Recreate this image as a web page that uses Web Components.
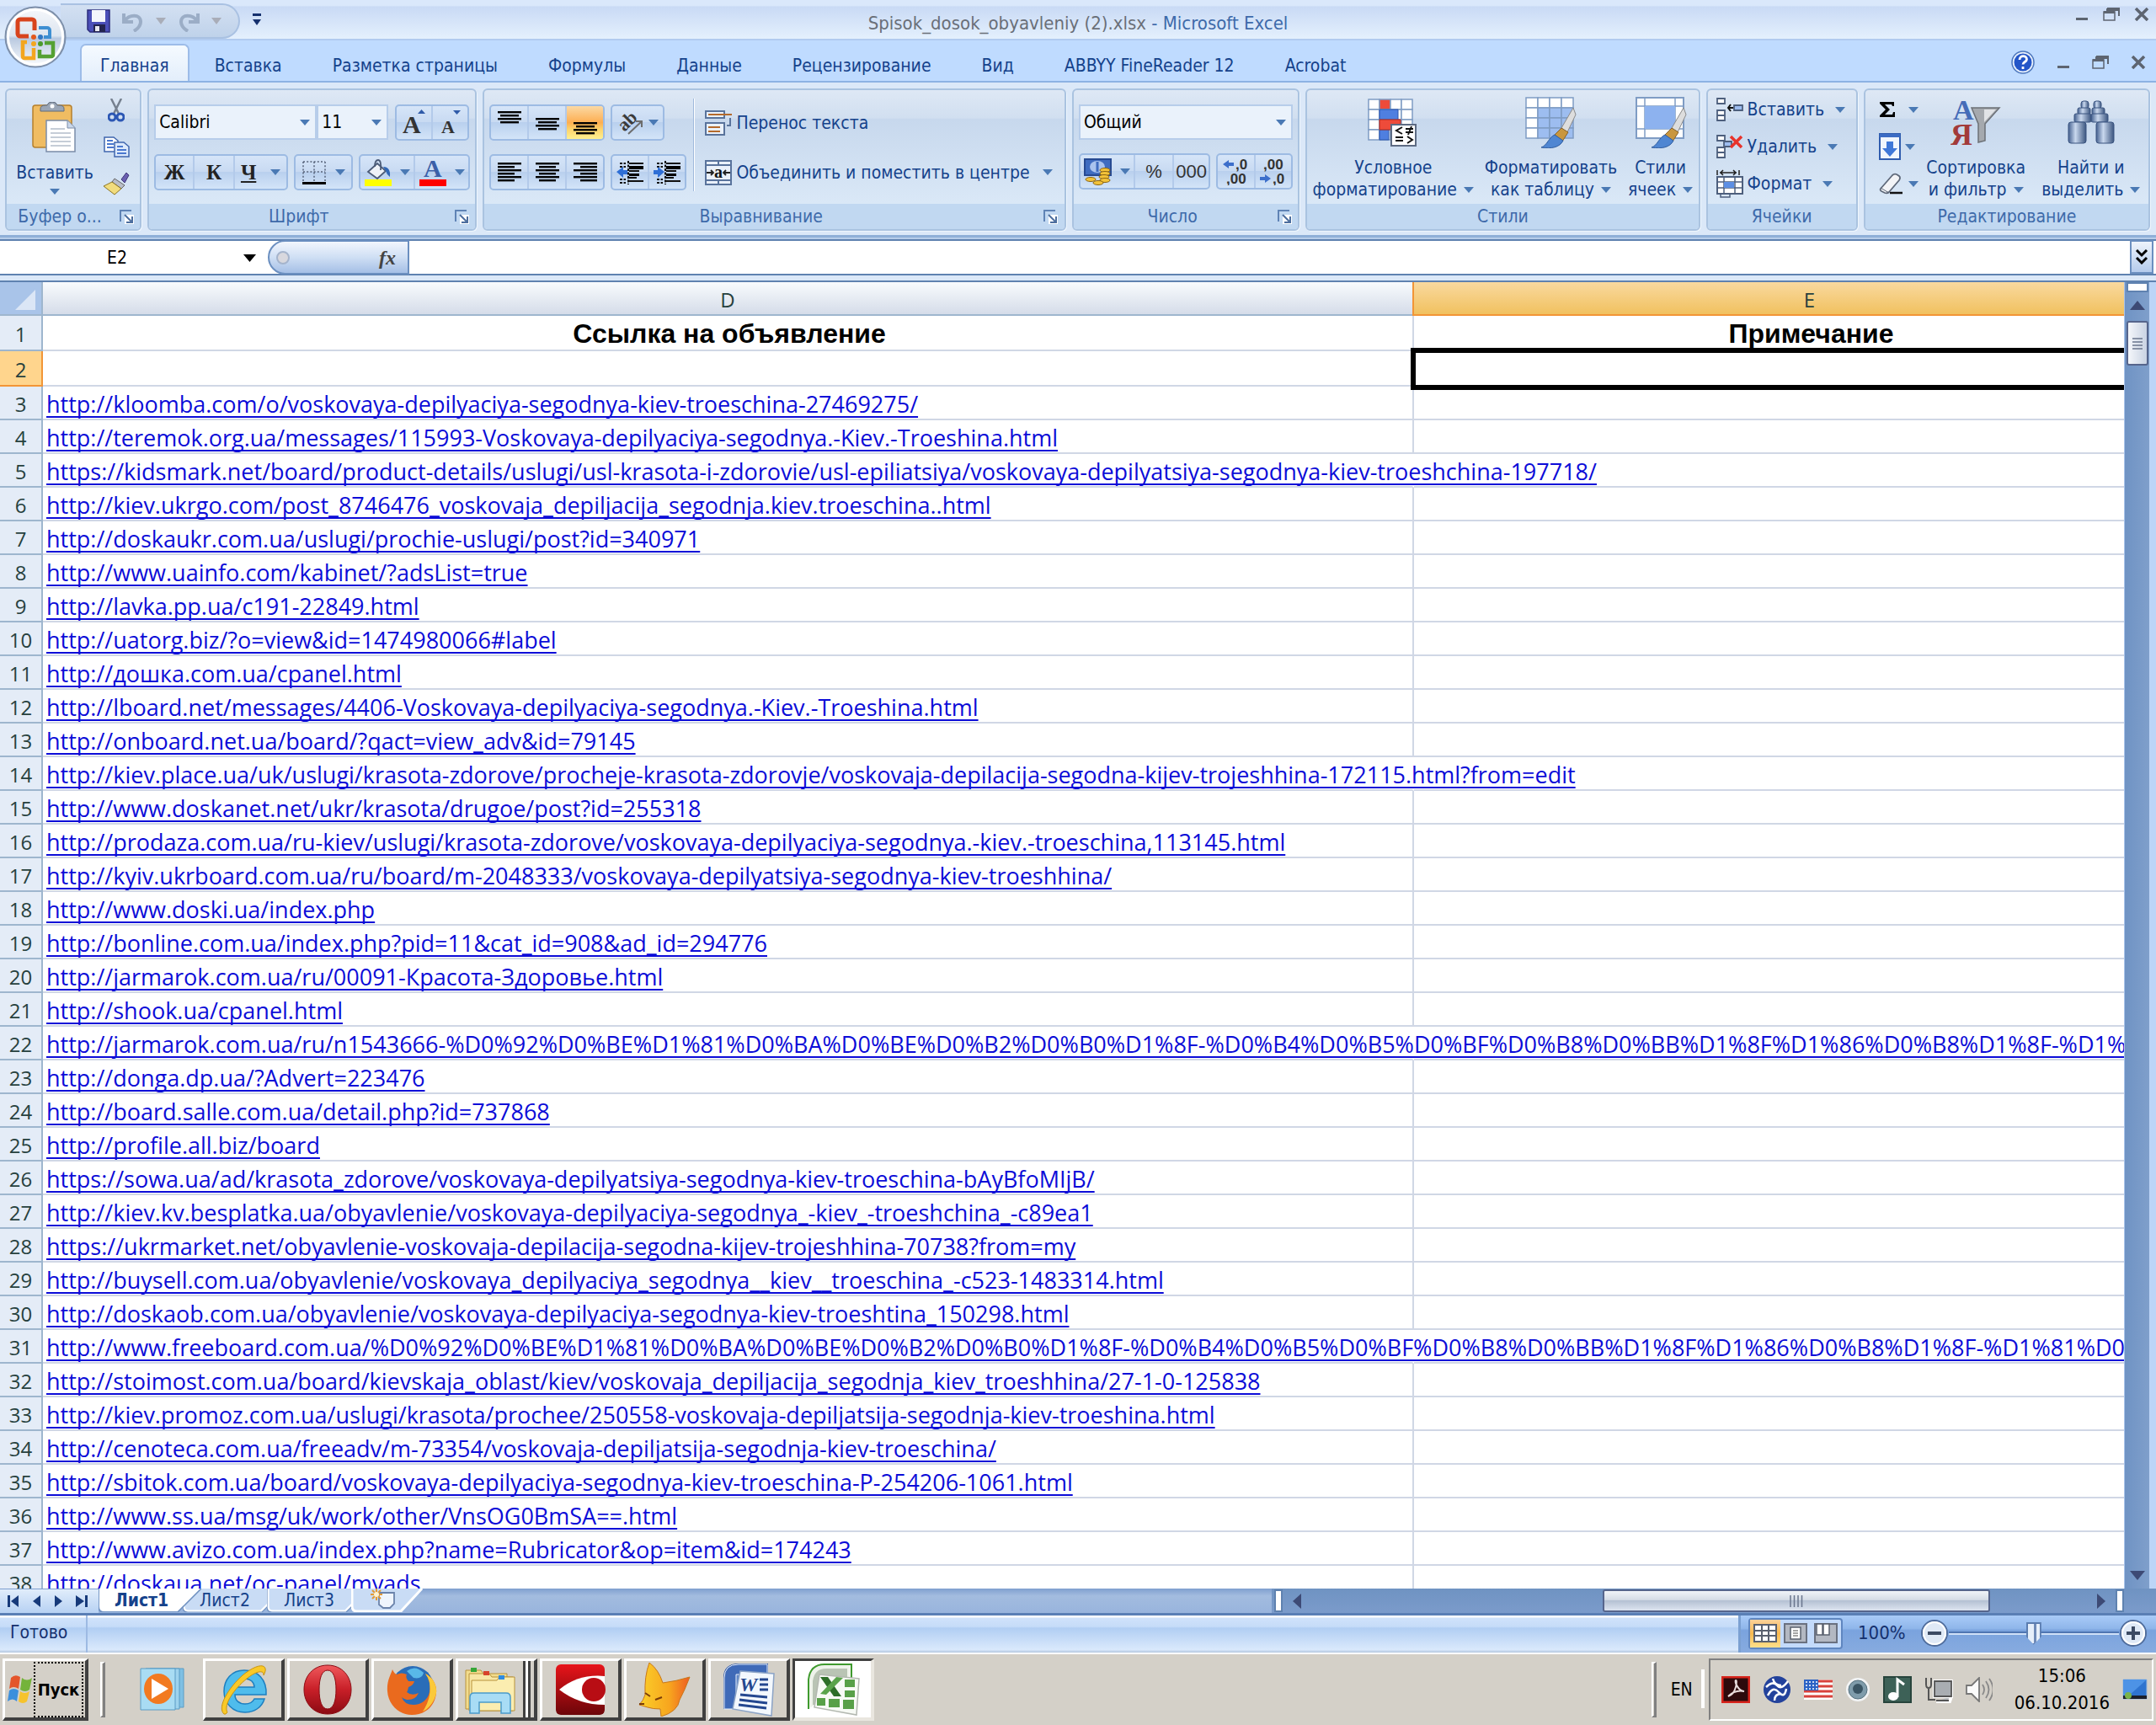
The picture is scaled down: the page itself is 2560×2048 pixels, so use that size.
<!DOCTYPE html>
<html lang="ru">
<head>
<meta charset="utf-8">
<title>Spisok_dosok_obyavleniy (2).xlsx - Microsoft Excel</title>
<style>
html,body{margin:0;height:100%}
body{font-family:"DejaVu Sans Condensed","DejaVu Sans",sans-serif;font-size:21px;line-height:26px;color:#15428b;overflow:hidden}
</style>
</head>
<body>
<xl-app></xl-app>
<script>
const BASE = `<style>
*{box-sizing:border-box}
button,input,select{font:inherit;color:inherit;margin:0;padding:0;border:0;background:none;outline:0;border-radius:0}
button{display:flex;align-items:center;justify-content:center;cursor:default;white-space:nowrap}
svg{display:block}
</style>`;
function fragment(html) {
  const t = document.createElement('template');
  t.innerHTML = html;
  return t.content;
}
function define(name, html, setup) {
  const content = fragment(BASE + html);
  customElements.define(name, class extends HTMLElement {
    constructor() {
      super();
      this.attachShadow({mode: 'open'}).append(content.cloneNode(true));
    }
    connectedCallback() { if (setup) setup(this, this.shadowRoot); }
  });
}

/* ---------- icons ---------- */
const bars = (list) => list.map(([x, y, l]) => `<rect x="${x}" y="${y}" width="${l}" height="2.4"/>`).join('');
const cells = (x, y, cw, ch, cols, rows, fill) => {
  let s = '';
  for (let r = 0; r < rows; r++) for (let c = 0; c < cols; c++)
    s += `<rect x="${x + c * cw}" y="${y + r * ch}" width="${cw}" height="${ch}" fill="${fill(c, r)}" stroke="#7f9cc4" stroke-width="1.5"/>`;
  return s;
};
const brush = `<path d="M58 14 44 38l7 5L61 22Z" fill="#ddd" stroke="#8a8a8a"/><path d="m44 38-8 8 9 8 7-11Z" fill="#c9963e" stroke="#86622a"/><path d="M36 46c-7 3-9 13-16 15 12 2 22 0 26-8Z" fill="#4f86d2" stroke="#2f5c9e"/>`;
const ICONS = {
  down: [12, 7, `<path d="M0 0h12L6 7Z" fill="#4a79b4"/>`],
  downGrey: [12, 8, `<path d="M0 0h12L6 8Z" fill="#a9adb8"/>`],
  downBlack: [15, 9, `<path d="M0 0h15L7.500 9Z" fill="#000"/>`],
  qat: [12, 14, `<path d="M1 0h10v3H1ZM1 7h10L6 14Z" fill="#15306e"/>`],
  office: [74, 74, `<defs><linearGradient id="a" x2="0" y2="1"><stop stop-color="#f6f8fb"/><stop offset=".48" stop-color="#dde5f0"/><stop offset=".52" stop-color="#b9c9e0"/><stop offset="1" stop-color="#fdfeff"/></linearGradient></defs><circle cx="37" cy="37" r="35.500" fill="url(#a)" stroke="#7d8fa9" stroke-width="2"/><circle cx="37" cy="37" r="32.500" fill="none" stroke="#fff" stroke-width="3"/>
   <g fill="none" stroke-width="5"><path d="M29 36H19a3 3 0 0 1-3-3V19a3 3 0 0 1 3-3h14a3 3 0 0 1 3 3v10" stroke="#d8431c"/><path d="M41 26h10a3 3 0 0 1 3 3v8h-7" stroke="#3f8fd2" stroke-width="4"/><path d="M27 43h-5v17a2 2 0 0 0 2 2h11V50" stroke="#f3a61f" stroke-width="4.500"/><path d="M42 52v8h14a2 2 0 0 0 2-2V44H48" stroke="#55a132" stroke-width="4.500"/></g><circle cx="35" cy="37" r="3" fill="#e2571c"/><circle cx="43" cy="37" r="3" fill="#3177c4"/><circle cx="35" cy="45" r="3" fill="#f3a61f"/><circle cx="43" cy="45" r="3" fill="#4b9a2c"/>`],
  save: [28, 28, `<path d="M1 1h26v26H4l-3-3Z" fill="#4b4fb8" stroke="#2b2c7c" stroke-width="1.500"/><path d="M6 1h16v14H6Z" fill="#f4f6fb"/><path d="M8 18h14v9H8Z" fill="#23244f"/><path d="M10 20h5v6h-5Z" fill="#e8e8ef"/>`],
  undo: [26, 25, `<path d="M2 3v10h11M3 12C8 4 22 3 22 13c0 5-3 8-8 11" fill="none" stroke="#9badc6" stroke-width="4"/>`],
  redo: [26, 25, `<path d="M24 3v10H13M23 12C18 4 4 3 4 13c0 5 3 8 8 11" fill="none" stroke="#9badc6" stroke-width="4"/>`],
  min: [16, 16, `<path d="M1 12h14v3H1Z" fill="#5d6470"/>`],
  restore: [20, 16, `<path d="M5 1h14v9M5 1v2h14" fill="none" stroke="#5d6470" stroke-width="2"/><path d="M1 5h13v10H1Z" fill="none" stroke="#5d6470" stroke-width="1.500"/><path d="M1 4h13v3H1Z" fill="#5d6470"/>`],
  close: [18, 16, `<path d="M2 1 16 15M16 1 2 15" stroke="#5d6470" stroke-width="3.500"/>`],
  help: [28, 28, `<circle cx="14" cy="14" r="13" fill="#e9f1fc" stroke="#4d77bd" stroke-width="1.500"/><circle cx="14" cy="14" r="10.500" fill="#2456c8"/><path d="M10 11c0-6 8.500-5.500 8.500-.5 0 3-4.500 3-4.500 6M14 19v3" fill="none" stroke="#fff" stroke-width="2.800"/>`],
  paste: [54, 60, `<rect x="1" y="4" width="46" height="50" rx="3" fill="#f0bc62" stroke="#b57f2c" stroke-width="1.500"/><path d="M10 8q0-4 6-4h2q1-4 6-4t6 4h2q6 0 6 4v3H10Z" fill="#9aa5b5" stroke="#5e6a7c"/><circle cx="24" cy="5" r="2.500" fill="#fff"/><path d="M17 22h25l9 9v28H17Z" fill="#fff" stroke="#7a8ca8" stroke-width="1.500"/><path d="M42 22v9h9" fill="#c9d7ea" stroke="#7a8ca8"/><path d="M22 32h17M22 37h24M22 42h24M22 47h24M22 52h24" stroke="#b3bdca" stroke-width="1.500"/>`],
  cut: [20, 28, `<path d="M4 0l9 18M16 0 7 18" stroke="#76808f" stroke-width="2.500"/><circle cx="5" cy="22" r="4" fill="none" stroke="#2c57b4" stroke-width="3"/><circle cx="15" cy="22" r="4" fill="none" stroke="#2c57b4" stroke-width="3"/>`],
  copy: [31, 25, `<g fill="#fff" stroke="#3f66ae" stroke-width="1.500"><path d="M1 1h11l5 4v13H1Z"/><path d="M13 7h11l6 5v12H13Z" fill="#dce9fb"/></g><path d="M4 5h7M4 9h8M4 13h8M16 12h7M16 16h11M16 20h11" stroke="#4a78cf" stroke-width="2"/>`],
  painter: [32, 28, `<path d="m22 9 6-8 3 3-5 9Z" fill="#6a5fb0" stroke="#3f3878"/><path d="m14 8 12 8-4 4L11 12Z" fill="#b9bec9" stroke="#666"/><path d="M11 12 1 17l13 10 8-7Z" fill="#f1dc7d" stroke="#8b7425"/>`],
  incA: [27, 34, `<text x="0" y="29" font-family="Liberation Serif" font-weight="700" font-size="30" fill="#333">A</text><path d="m18 6 4.500-5L27 6Z" fill="#2f5aa8"/>`],
  decA: [27, 34, `<text x="3" y="29" font-family="Liberation Serif" font-weight="700" font-size="22" fill="#333">A</text><path d="m17 2 4.500 5L26 2Z" fill="#2f5aa8"/>`],
  borders: [28, 28, `<path d="M1 1h26M1 13h26M1 1v24M14 1v24M27 1v24" stroke="#56627a" stroke-width="1.500" stroke-dasharray="2 2.200"/><path d="M0 25h28v3H0Z"/>`],
  fill: [32, 32, `<path d="M4 15 15 5l10 9-10 9Z" fill="#eef2f8" stroke="#4b5b77" stroke-width="1.800"/><path d="M12 9q0-8 4-8t3 12" fill="none" stroke="#4b5b77" stroke-width="1.800"/><path d="M22 9q9 0 8 12-4-3-5-7Z" fill="#2f66b5"/><path d="M0 24h32v8H0Z" fill="#ff0"/>`],
  color: [32, 33, `<text x="5" y="22" font-family="Liberation Serif" font-weight="700" font-size="30" fill="#3a5fa8">A</text><path d="M0 25h32v8H0Z" fill="#f00"/>`],
  top: [28, 28, bars([[0,0,28],[3,4,22],[0,8,28],[3,12,22]])],
  mid: [28, 28, bars([[0,8,28],[3,12,22],[0,16,28],[3,20,22]])],
  bot: [28, 28, bars([[0,13,28],[3,17,22],[0,21,28],[3,25,22]])],
  left: [28, 24, bars([[0,0,28],[0,4,20],[0,8,28],[0,12,20],[0,16,28],[0,20,20]])],
  center: [28, 24, bars([[0,0,28],[4,4,20],[0,8,28],[4,12,20],[0,16,28],[4,20,20]])],
  right: [28, 24, bars([[0,0,28],[8,4,20],[0,8,28],[8,12,20],[0,16,28],[8,20,20]])],
  outdent: [33, 30, `<path d="M4 4h7M4 8h7M4 23h7M4 27h7M14 1v28" stroke="#111" stroke-width="2" stroke-dasharray="3 1.500"/><path d="M15 4h17M15 25h17M15 13h12M15 21h9" stroke="#111" stroke-width="2"/><path d="M15 7h17v4H15ZM15 16h12v3H15Z"/><path d="M0 14 8 8v4h5v5H8v4Z" fill="#2f6fd6"/>`],
  indent: [33, 30, `<path d="M4 4h7M4 8h7M4 23h7M4 27h7M14 1v28" stroke="#111" stroke-width="2" stroke-dasharray="3 1.500"/><path d="M15 4h17M15 25h17M15 13h12M15 21h9" stroke="#111" stroke-width="2"/><path d="M15 7h17v4H15ZM15 16h12v3H15Z"/><path d="M13 14 5 8v4H0v5h5v4Z" fill="#2f6fd6"/>`],
  orient: [32, 28, `<text x="4" y="22" font-family="Liberation Serif" font-weight="700" font-size="22" fill="#3b3b3b" transform="rotate(-45 10 18)">ab</text><path d="M13 27 29 12M22 12h7v7" fill="none" stroke="#6d6d6d" stroke-width="2"/>`],
  wrap: [32, 30, `<g fill="#eaf1fb" stroke="#59739c" stroke-width="2"><path d="M1 1h22v8H1ZM1 15h22v14H1Z"/></g><path d="M4 5h28M4 20h14M4 25h14" stroke="#b46a2c" stroke-width="2"/><path d="M30 9v9h-4" fill="none" stroke="#59739c" stroke-width="2"/>`],
  merge: [32, 30, `<path d="M1 1h30v28H1Z" fill="#eaf1fb" stroke="#59739c" stroke-width="2"/><path d="M1 6h30M1 24h30M16 1v5M16 24v5" stroke="#59739c" stroke-width="2"/><path d="M2 15h7M7 12l3 3-3 3M30 15h-7M25 12l-3 3 3 3" stroke="#222" fill="none" stroke-width="1.800"/><text x="11" y="21" font-family="Liberation Serif" font-weight="700" font-size="20" fill="#111">a</text>`],
  money: [33, 32, `<path d="M1 1h31v19H1Z" fill="#3f6cc0" stroke="#274a92" stroke-width="2"/><ellipse cx="16" cy="10" rx="9" ry="7" fill="#a9c3ee"/><path d="M16 4v12" stroke="#3f6cc0" stroke-width="3"/><g fill="#f3c33a" stroke="#8c6410"><ellipse cx="25" cy="14" rx="6" ry="2.500"/><ellipse cx="25" cy="18" rx="6" ry="2.500"/><ellipse cx="24" cy="22" rx="6" ry="2.500"/><ellipse cx="8" cy="25" rx="6" ry="2.500"/><ellipse cx="25" cy="26" rx="6" ry="2.500"/><ellipse cx="17" cy="29" rx="6" ry="2.500"/></g>`],
  dec1: [32, 32, `<path d="M0 7 7 2v3h6v4H7v3Z" fill="#3d6fcb"/><g font-family="Liberation Sans" font-weight="700" font-size="17" fill="#333"><text x="15" y="13">,0</text><text x="4" y="30">,00</text></g>`],
  dec2: [32, 32, `<path d="M13 24 6 19v3H0v4h6v3Z" fill="#3d6fcb"/><g font-family="Liberation Sans" font-weight="700" font-size="17" fill="#333"><text x="4" y="13">,00</text><text x="15" y="30">,0</text></g>`],
  cond: [62, 58, cells(2, 2, 13, 12, 4, 4, (c, r) => c === 1 && r === 0 ? '#ee4b3a' : '#fff') + `<path d="M15 14h22v12H15ZM15 38h11v12H15Z" fill="#4f7fe0" stroke="#2d56ad"/><path d="M15 26h25v12H15Z" fill="#ee4b3a" stroke="#b12d20"/><path d="M29 32h29v25H29Z" fill="#fff" stroke="#5d6b83" stroke-width="2"/><path d="m42 35-7 4 7 4M34 47h9M34 51h9M46 37h9M46 41h9M53 34l-4 10M48 46l6 4-6 4" fill="none" stroke="#111" stroke-width="2"/>`],
  fmtTable: [62, 62, cells(2, 2, 14, 12, 4, 4, (c, r) => c && r ? '#9dbdf0' : '#fff') + brush],
  styles: [62, 62, `<path d="M2 2h56v48H2Z" fill="#fff" stroke="#7f9cc4" stroke-width="2"/><path d="M2 12h56M2 39h56M12 2v48M48 2v48" stroke="#7f9cc4" stroke-width="1.500"/><path d="M12 12h36v27H12Z" fill="#8db2ef"/>` + brush],
  insCells: [32, 30, `<g fill="#fff" stroke="#4d5f7d" stroke-width="1.800"><path d="M1 2h9v6H1ZM1 16h9v6H1ZM1 22h9v6H1Z"/><path d="M21 10h10v6H21Z" fill="#9dbdf0"/></g><path d="M20 13h-5M17 9l-3 4 3 4" stroke="#111" fill="none" stroke-width="2"/>`],
  delCells: [32, 30, `<g fill="#fff" stroke="#4d5f7d" stroke-width="1.800"><path d="M1 2h9v6H1ZM1 16h9v6H1ZM1 22h9v6H1Z"/><path d="M9 9h9v6H9Z" fill="#9dbdf0"/></g><path d="m17 3 13 13M30 3 17 16" stroke="#e8332b" stroke-width="3.500"/>`],
  fmtCells: [32, 34, `<path d="M1 1v6M27 1v6M4 4h20M8 1 5 4l3 3M20 1l3 3-3 3" stroke="#222" fill="none" stroke-width="1.500"/><path d="M1 9h30v20H1Z" fill="#fff" stroke="#4d5f7d" stroke-width="2"/><path d="M1 15h30M1 22h30M9 9v20M22 9v20M5 29v4h11v-4" stroke="#4d5f7d" fill="none" stroke-width="1.500"/><path d="M9 15h12v7H9Z" fill="#5d8fe4"/>`],
  sigma: [20, 20, `<path d="M1 1h17v5h-2l-1-2H7l6 6-6 6h9l1-3h2v6H1v-2l7-7-7-7Z"/>`],
  filldown: [26, 32, `<path d="M1 1h24v30H1Z" fill="#f1f6fd" stroke="#2f5cae" stroke-width="2"/><path d="M1 1h24v4H1Z" fill="#3c6cc4"/><path d="M9 10h8v8h5l-9 10-9-10h5Z" fill="#3f78d8"/>`],
  eraser: [30, 26, `<path d="M2 19 16 3q2-2 5-1l3 2q2 2 0 5L12 23q-2 2-5 1l-4-2q-2-1-1-3Z" fill="#f3f4f7" stroke="#5e6879" stroke-width="1.800"/><path d="M2 18l10 6" stroke="#5e6879"/><path d="M13 24h15" stroke="#111" stroke-width="2.500"/>`],
  sort: [60, 58, `<path d="M25 12h33L41 31v20l-8 2V31Z" fill="#a5a9ae" stroke="#6c7076" stroke-width="1.500"/><path d="M40 14h14L40 29Z" fill="#e1e3e6"/><text x="3" y="26" font-family="Liberation Serif" font-weight="700" font-size="34" fill="#456cb8">А</text><text x="0" y="56" font-family="Liberation Serif" font-weight="700" font-size="36" fill="#a23a3a">Я</text>`],
  find: [56, 52, `<defs><linearGradient id="b"><stop stop-color="#44608f"/><stop offset=".4" stop-color="#c9d8ee"/><stop offset="1" stop-color="#3b557f"/></linearGradient></defs><g fill="url(#b)" stroke="#3b5480"><rect x="16" y="1" width="9" height="9" rx="3"/><rect x="31" y="1" width="9" height="9" rx="3"/><rect x="12" y="9" width="15" height="8" rx="2"/><rect x="29" y="9" width="15" height="8" rx="2"/><rect x="8" y="16" width="20" height="10" rx="2"/><rect x="28" y="16" width="20" height="10" rx="2"/><rect x="1" y="26" width="21" height="25" rx="3"/><rect x="34" y="26" width="21" height="25" rx="3"/></g>`],
  launch: [17, 17, `<path d="M1 14V1h13" fill="none" stroke="#5f83b5" stroke-width="2"/><path d="M6 6h11v11H6Z" fill="#fff"/><path d="M6 6l9 9M15 8v7H8" stroke="#4d6e9e" fill="none" stroke-width="2"/>`],
  chevrons: [16, 18, `<path d="m2 1 6 6 6-6M2 10l6 6 6-6" stroke="#000" stroke-width="3" fill="none"/>`],
  corner: [24, 24, `<path d="M24 0v24H0Z" fill="#dbe6f6"/>`],
  up: [18, 11, `<path d="M9 0l9 11H0Z" fill="#3d4a75"/>`],
  dn: [18, 11, `<path d="M0 0h18L9 11Z" fill="#3d4a75"/>`],
  lt: [10, 18, `<path d="M10 0v18L0 9Z" fill="#3d4a75"/>`],
  rt: [10, 18, `<path d="M0 0l10 9L0 18Z" fill="#3d4a75"/>`],
  first: [14, 14, `<path d="M0 0h3v14H0ZM13 0v14L4 7Z" fill="#173a7a"/>`],
  prev: [9, 14, `<path d="M9 0v14L0 7Z" fill="#173a7a"/>`],
  next: [9, 14, `<path d="M0 0l9 7-9 7Z" fill="#173a7a"/>`],
  last: [14, 14, `<path d="M11 0h3v14h-3ZM0 0l10 7-10 7Z" fill="#173a7a"/>`],
  gripV: [12, 14, `<path d="M0 1h12M0 5h12M0 9h12M0 13h12" stroke="#69758d" stroke-width="1.500"/>`],
  gripH: [16, 14, `<path d="M1 0v14M5.500 0v14M10 0v14M14.500 0v14" stroke="#69758d" stroke-width="1.500"/>`],
  tab: [122, 28, `<path d="M1 0h120L94 27H7Q1 27 1 21Z" fill="#c9dcf5"/><path d="M1 0v21q0 6 6 6h86L120 0" fill="none" stroke="#fff" stroke-width="3"/><path d="M0 0v22q0 6 6 6h88L122 0" fill="none" stroke="#6f90bf" stroke-width="1.200"/>`],
  tabOn: [122, 28, `<path d="M1 0h120L94 27H7Q1 27 1 21Z" fill="#fff"/><path d="M0 0v22q0 6 6 6h88L122 0" fill="none" stroke="#6f90bf" stroke-width="1.500"/>`],
  newTab: [86, 28, `<path d="M1 0h84L60 27H7Q1 27 1 21Z" fill="#c9dcf5"/><path d="M1 0v21q0 6 6 6h52L84 0" fill="none" stroke="#fff" stroke-width="3"/><path d="M33 5h18v13l-5 5H38l-5-4Z" fill="#eff5fd" stroke="#6b83ab" stroke-width="1.800"/><path d="M30 0v14M23 7h14M25 2l10 10M35 2 25 12" stroke="#e29a36" stroke-width="2"/><circle cx="30" cy="7" r="3" fill="#fff3d0"/>`],
  vNormal: [28, 22, `<path d="M1 1h26v20H1ZM1 8h26M1 14h26M10 1v20M18 1v20" fill="#fff" stroke="#59606e" stroke-width="2"/>`],
  vLayout: [28, 24, `<path d="M1 1h26v22H1Z" fill="#b3b8c2" stroke="#6a7180" stroke-width="2"/><path d="M8 5h12v14H8Z" fill="#fff" stroke="#59606e" stroke-width="1.500"/><path d="M11 9h6M11 12h6M11 15h6" stroke="#888" stroke-width="1.500"/>`],
  vBreak: [28, 24, `<path d="M1 1h26v22H1Z" fill="#b3b8c2" stroke="#6a7180" stroke-width="2"/><path d="M3 1h7v13H3ZM11 1h7v13h-7Z" fill="#fff" stroke="#59606e" stroke-width="1.500"/>`],
  minus: [34, 34, `<circle cx="17" cy="17" r="15" fill="#dfe9f6" stroke="#4f6c9b" stroke-width="2"/><circle cx="17" cy="17" r="13" fill="none" stroke="#fff" stroke-width="2"/><path d="M9 15h16v4H9Z" fill="#3c4a63"/>`],
  plus: [34, 34, `<circle cx="17" cy="17" r="15" fill="#dfe9f6" stroke="#4f6c9b" stroke-width="2"/><circle cx="17" cy="17" r="13" fill="none" stroke="#fff" stroke-width="2"/><path d="M9 15h16v4H9ZM15 9h4v16h-4Z" fill="#3c4a63"/>`],
  win: [32, 36, `<path d="M5 4q5-5 11-1l-2 14Q8 13 3 17Z" fill="#e4552b"/><path d="M18 4q6 5 12 0l-3 14q-5 4-11 0Z" fill="#74b33b"/><path d="M3 19q5-4 11 0l-2 13q-5-5-11 0Z" fill="#3c8fdc"/><path d="M16 20q5 4 11 0l-3 12q-5 4-10 0Z" fill="#f6c32c"/>`],
  media: [58, 52, `<g stroke="#5b9cc4"><path d="M12 1h40v46H12Z" fill="#7fc0e4"/><path d="M7 1h40v48H7Z" fill="#9ed3ee"/><path d="M1 1h41v49H1Z" fill="#a9dcf3"/></g><ellipse cx="22" cy="25" rx="17" ry="18" fill="#f27a21"/><path d="M14 13v24l20-12Z" fill="#fff"/>`],
  ie: [58, 62, `<path d="M30 8c-15 0-24 11-24 25s10 25 25 25c11 0 20-6 23-16H42c-2 4-6 6-11 6-7 0-12-4-12-11h37C57 19 46 8 30 8Zm-11 20c1-6 6-10 12-10s11 4 11 10Z" fill="#4fbcec" stroke="#1d7fc0" stroke-width="1.500"/><path d="M6 60C-3 52 12 28 28 14 40 4 53-1 55 6c1 2-1 6-2 8 1-7-9-5-20 4C18 30 5 49 10 58Q8 61 6 60Z" fill="#f9c928" stroke="#c99410"/>`],
  opera: [58, 60, `<defs><linearGradient id="c" x2="0" y2="1"><stop stop-color="#f0595c"/><stop offset=".5" stop-color="#c81f28"/><stop offset="1" stop-color="#8b0a12"/></linearGradient></defs><path fill-rule="evenodd" d="M29 1C12 1 1 14 1 30s11 29 28 29 28-13 28-29S46 1 29 1Zm0 6c7 0 10 10 10 23s-3 23-10 23-10-10-10-23S22 7 29 7Z" fill="url(#c)" stroke="#8b0a12"/>`],
  firefox: [60, 60, `<circle cx="31" cy="27" r="25" fill="#2a6db8"/><path d="M24 8q10-8 20 2-2 8-12 6Z" fill="#59b8e8"/><path d="M1 32C0 20 5 12 7 6q2 5 5 6 6-3 12 0-2 4 2 8h7q-1 5-7 7-1 5-2 6 6 5 14 1-4 9-14 8-4-1-6-3 3 9 14 9c12 0 22-10 19-26q-1-6-5-11c10 5 14 15 13 23-2 17-14 26-29 26S2 48 1 32Z" fill="#ea6a1e"/><path d="M46 11c10 5 14 15 13 23-2 10-8 18-16 22 6-9 10-20 8-34q-1-6-5-11Z" fill="#fbc93a"/>`],
  explorer: [62, 58, `<g stroke="#b8923a"><path d="M1 6h18l3 4h28v42H1Z" fill="#f2dc8d"/><path d="M5 10h24l3 4h25v40H5Z" fill="#f7e7a6"/><path d="M8 18h30l3-4h18v40H8Z" fill="#fbedb0"/></g><path d="M7 3h7v5H7Z" fill="#35a638"/><path d="M22 7h7v5h-7Z" fill="#d8432b"/><path d="M40 12h7v5h-7Z" fill="#2f8be0"/><path d="M6 57V38q0-5 5-5h38q5 0 5 5v19H43V44H17v13Z" fill="#a8dcf5" stroke="#4a9bcb" stroke-width="1.500"/>`],
  finereader: [60, 62, `<defs><linearGradient id="d" x2="0" y2="1"><stop stop-color="#e8141a"/><stop offset="1" stop-color="#6c0509"/></linearGradient></defs><rect x="1" y="1" width="58" height="60" rx="6" fill="url(#d)"/><path d="M5 31Q28 12 59 15v34Q28 49 5 31Z" fill="#fff"/><circle cx="46" cy="31" r="14" fill="#b80d14"/>`],
  fox: [62, 64, `<defs><linearGradient id="e"><stop stop-color="#fbd02a"/><stop offset=".6" stop-color="#f7a51e"/><stop offset="1" stop-color="#ee5c22"/></linearGradient></defs><path d="M13 0q11 8 16 24 16-2 32-7-6 16-12 27-2 14-22 20l-1-9q-9 0-15-2L1 50q5-5 7-12-1-22 5-38Z" fill="url(#e)" stroke="#c8781a"/><path d="M8 36l6 4M20 44l8-3M1 49h6" stroke="#7a3c08" stroke-width="2"/>`],
  word: [64, 64, `<path d="M3 55V18Q3 2 20 2h34v40" fill="#5f86c8" stroke="#2f57a4" stroke-width="2"/><path d="M3 55h14V14h37V2H20Q3 2 3 18Z" fill="#3f6ab8" stroke="#e9f0fb"/><path d="m22 10 40 3-3 50-46-8Z" fill="#f3f8fe" stroke="#8ba3c6" stroke-width="1.500"/><text x="21" y="34" font-family="Liberation Serif" font-weight="700" font-style="italic" font-size="24" fill="#24478f">W</text><path d="M45 20h10M45 26h10M45 32h10M22 38l32 3M21 44l33 4M20 50l33 4" stroke="#24478f" stroke-width="3"/>`],
  excel: [64, 64, `<path d="M3 55V20Q5 2 22 2h32v18" fill="#eef3ea" stroke="#3f9a2e" stroke-width="2"/><path d="M8 50V22Q10 7 24 7h25v10H20v33Z" fill="#b9c4b4"/><path d="m16 14 47 5-3 43-50-9Z" fill="#f7faf5" stroke="#b3b8b0" stroke-width="1.500"/><path d="M17 17h9l16 23h-9Z" fill="#2d6e28"/><path d="m36 17 8 1-20 20-7-1Z" fill="#5aa34b"/><g fill="#58a048"><path d="M46 20h12v9H46ZM46 33h12v8H46ZM13 42h10v9H13ZM27 43h13v10H27ZM44 44h13v11H44Z"/></g>`],
  adobe: [34, 32, `<path d="M1 1h32v30H1Z" fill="#2d0a0c" stroke="#d8241c" stroke-width="3"/><path d="M8 24c10-3 11-20 9-19s3 13 10 13M8 24q8-8 19-6" fill="none" stroke="#e8dcdc" stroke-width="2"/>`],
  globe: [34, 34, `<circle cx="17" cy="17" r="16" fill="#23429c"/><path d="M4 14q8-8 13-2t13-5M6 24q6-12 13-4t9-4M12 4q2 8 10 8M14 30q0-8 8-8" fill="none" stroke="#fff" stroke-width="2.500"/>`],
  flag: [34, 24, `<path d="M0 0h34v24H0Z" fill="#fff"/><path d="M0 2h34M0 8h34M0 14h34M0 20h34" stroke="#d8423c" stroke-width="3"/><path d="M0 0h17v13H0Z" fill="#2a62c4"/><path d="M2 3h14M2 7h14M2 11h14" stroke="#fff" stroke-width="1.500" stroke-dasharray="2 2"/>`],
  cam: [30, 32, `<circle cx="15" cy="16" r="14" fill="#f2f4f5"/><circle cx="15" cy="16" r="11" fill="#7f9cab" stroke="#55707e"/><circle cx="15" cy="15" r="6" fill="#3a5564"/>`],
  note: [34, 32, `<path d="M1 1h32v30H1Z" fill="#3d6157" stroke="#27443c" stroke-width="2"/><ellipse cx="12" cy="24" rx="6" ry="5" fill="#fff"/><path d="M17 25V4l8 6" stroke="#fff" stroke-width="3" fill="none"/>`],
  net: [34, 32, `<path d="M12 6h20v18H12ZM14 30h16l2-6" fill="#b9bcc0" stroke="#fff" stroke-width="4"/><path d="M12 6h20v18H12Z" fill="#a9adb2" stroke="#555" stroke-width="1.800"/><path d="M14 29h15M2 2v8q0 4 3 4t3-4V2M5 14v14h8" fill="none" stroke="#555" stroke-width="2"/>`],
  sound: [32, 30, `<path d="M1 10h6l9-9v28l-9-9H1Z" fill="#fbfbfb" stroke="#777" stroke-width="1.800"/><path d="M20 9q4 6 0 12M24 5q7 10 0 20M28 2q9 13 0 26" fill="none" stroke="#888" stroke-width="1.800"/>`],
  desk: [30, 26, `<path d="M1 1h28v23H1Z" fill="#2f74cf" stroke="#9cb8d8"/><path d="M1 1h28L8 20H1Z" fill="#4d93e6"/><path d="M1 20h28v4H1Z" fill="#1b1f2b"/><circle cx="7" cy="20" r="4" fill="#7ab34a"/>`]
};
define('x-icon', `<style>:host{display:block;flex:none;pointer-events:none}</style>`, (el, root) => {
  const [w, h, body] = ICONS[el.getAttribute('name')];
  root.append(fragment(`<svg aria-hidden="true" width="${w}" height="${h}" viewBox="0 0 ${w} ${h}">${body}</svg>`));
});

/* ---------- small controls ---------- */
define('tool-button', `<style>
:host{display:flex}
button{flex:1;gap:5px}
:host([stack]) button{flex-direction:column;gap:0}
:host([start]) button{justify-content:flex-start}
:host([on]) button{background:linear-gradient(#fbd9a4,#fdae51 50%,#fdd36b 70%,#fff08f)}
</style><button type="button"><slot></slot></button>`, (el, root) => {
  if (el.title) root.querySelector('button').setAttribute('aria-label', el.title);
});
define('tool-strip', `<style>
:host{display:flex;height:43px;border:2px solid #9dbbe3;border-radius:5px;overflow:hidden;background:linear-gradient(#d6e5f8,#c8daf2 48%,#b9d0ee 50%,#d3e4f8)}
::slotted(*:not(:first-child)){border-left:2px solid #b3caea}
</style><slot></slot>`);
define('combo-box', `<style>
:host{display:flex}
label{flex:1;display:flex;align-items:center;height:42px;background:#eaf2fb;border:2px solid #b7cdea;color:#000}
select{appearance:none;flex:1;height:100%;padding-left:4px;min-width:0;margin-right:-20px}
x-icon{margin-right:6px}
</style><label><select></select><x-icon name="down"></x-icon></label>`, (el, root) => {
  const s = root.querySelector('select');
  s.setAttribute('aria-label', el.getAttribute('label'));
  s.append(new Option(el.getAttribute('value')));
});
define('ribbon-group', `<style>
:host{display:flex;flex-direction:column;min-width:0;border:2px solid #aac3e0;border-radius:6px;overflow:hidden;background:linear-gradient(#dee8f5,#d1dff0 20%,#c7d8ed 21%,#dae8f7 82%);box-shadow:1px 1px 0 #eef6fd}
.body{flex:1;display:flex;min-width:0}
footer{display:flex;align-items:center;height:30px;background:#c1d8f1;color:#3e6aaa}
span{flex:1;text-align:center}
button{width:32px}
</style><div class="body"><slot></slot></div><footer><span></span></footer>`, (el, root) => {
  root.querySelector('span').textContent = el.getAttribute('label');
  if (el.hasAttribute('launcher'))
    root.querySelector('footer').append(fragment('<button type="button" aria-label="Параметры"><x-icon name="launch"></x-icon></button>'));
});

/* ---------- title bar and tabs ---------- */
define('xl-titlebar', `<style>
:host{display:flex;align-items:stretch;height:48px;background:linear-gradient(#dae8fb 0 14%,#c9daf5 18%,#e4f0fd);border-bottom:2px solid #b1cbf0}
.qat{display:flex;align-items:center;gap:14px;margin:4px 0 0 72px;padding:0 22px 0 31px;height:42px;width:213px;border:2px solid #a9c1e2;border-left:0;border-radius:0 22px 22px 0;background:linear-gradient(#d3e0f2,#bfd2ea)}
.more{width:40px}
h1{flex:1;margin:0;padding-top:15px;text-align:center;font:inherit;font-size:22px;color:#3e6aaa}
h1 span{color:#6a6f78}
.win{display:flex;justify-content:flex-end;gap:17px;padding:9px 8px 0 0;align-items:flex-start;width:325px}
</style>
<div class="qat"><button aria-label="Сохранить"><x-icon name="save"></x-icon></button><button aria-label="Отменить"><x-icon name="undo"></x-icon></button><x-icon name="downGrey"></x-icon><button aria-label="Вернуть"><x-icon name="redo"></x-icon></button><x-icon name="downGrey"></x-icon></div>
<button class="more" aria-label="Настройка панели"><x-icon name="qat"></x-icon></button>
<h1><span>Spisok_dosok_obyavleniy (2).xlsx</span> - Microsoft Excel</h1>
<div class="win"><button aria-label="Свернуть"><x-icon name="min"></x-icon></button><button aria-label="Развернуть"><x-icon name="restore"></x-icon></button><button aria-label="Закрыть"><x-icon name="close"></x-icon></button></div>`);
define('xl-tabs', `<style>
:host{display:flex;height:50px;padding-left:95px;align-items:flex-end;background:#bfdbff;border-bottom:2px solid #8db2e3}
button{height:44px;padding:8px 30px 0;color:#15428b}
button.on{padding:6px 22px 0;margin-bottom:-2px;background:linear-gradient(#f5faff,#e3eefb);border:2px solid #9dbce8;border-bottom:0;border-radius:7px 7px 0 0}
nav{display:flex;flex:1}
.win{display:flex;align-items:center;gap:26px;height:44px;padding-right:12px}
.win button{padding:0;height:auto}
</style><nav></nav><div class="win"><button aria-label="Справка"><x-icon name="help"></x-icon></button><button aria-label="Свернуть окно"><x-icon name="min"></x-icon></button><button aria-label="Восстановить окно"><x-icon name="restore"></x-icon></button><button aria-label="Закрыть окно"><x-icon name="close"></x-icon></button></div>`, (el, root) => {
  const nav = root.querySelector('nav');
  ['Главная','Вставка','Разметка страницы','Формулы','Данные','Рецензирование','Вид','ABBYY FineReader 12','Acrobat'].forEach((t, i) => {
    const b = document.createElement('button');
    b.textContent = t;
    if (!i) b.className = 'on';
    nav.append(b);
  });
});

/* ---------- ribbon ---------- */
define('xl-ribbon', `<style>
:host{display:grid;grid-template-columns:162fr 391fr 692fr 270fr 468fr 180fr 340fr;gap:7px;height:184px;padding:7px 7px 5px 6px;background:#dbe8f8;border-bottom:3px solid #8fb0d8}
.rows{display:flex;flex-direction:column;gap:16px;padding:17px 6px 0;flex:1}
.row{display:flex;gap:7px}
.clip{display:flex;flex-direction:column;justify-content:space-between;align-items:center;padding:10px 12px 10px 0}
.big{flex:1;padding-top:9px}
.lines{display:flex;align-items:center;gap:8px}
.tall{height:70px;display:flex;align-items:center;flex:none}
.bigs{display:flex;flex:1;justify-content:space-around;align-items:flex-start;padding:3px 0 0}
.glyph{font:700 25px/30px "Liberation Serif",serif;color:#222}
.num{font:22px/28px "Liberation Sans",sans-serif;color:#333}
.side{display:flex;flex-direction:column;justify-content:space-between;padding:4px 10px 4px;height:134px}
.side tool-button{height:38px}
.vsep{width:2px;height:110px;margin:10px 12px 0 2px;background:#9fb9dc;border-right:1px solid #fff}
i{font-style:italic}
</style>
<ribbon-group label="Буфер о..." launcher>
  <tool-button stack class="big"><x-icon name="paste"></x-icon><span style="padding-top:11px">Вставить</span><span class="lines" style="height:20px"><x-icon name="down"></x-icon></span></tool-button>
  <div class="clip"><tool-button title="Вырезать"><x-icon name="cut"></x-icon></tool-button><tool-button title="Копировать"><x-icon name="copy"></x-icon></tool-button><tool-button title="Формат по образцу"><x-icon name="painter"></x-icon></tool-button></div>
</ribbon-group>
<ribbon-group label="Шрифт" launcher>
  <div class="rows">
    <div class="row" style="gap:0"><combo-box label="Шрифт" value="Calibri" style="width:193px"></combo-box><combo-box label="Размер" value="11" style="width:85px;margin-right:8px"></combo-box>
      <tool-strip style="width:88px"><tool-button title="Увеличить" style="flex:1"><x-icon name="incA"></x-icon></tool-button><tool-button title="Уменьшить" style="flex:1"><x-icon name="decA"></x-icon></tool-button></tool-strip></div>
    <div class="row">
      <tool-strip style="width:159px"><tool-button style="width:44px"><span class="glyph">Ж</span></tool-button><tool-button style="width:48px"><i class="glyph">К</i></tool-button><tool-button style="flex:1"><u class="glyph">Ч</u><x-icon name="down" style="margin-left:12px"></x-icon></tool-button></tool-strip>
      <tool-strip style="width:70px"><tool-button title="Границы" style="flex:1"><x-icon name="borders"></x-icon><x-icon name="down" style="margin-left:6px"></x-icon></tool-button></tool-strip>
      <tool-strip style="width:132px"><tool-button title="Заливка" style="flex:1"><x-icon name="fill"></x-icon><x-icon name="down" style="margin-left:5px"></x-icon></tool-button><tool-button title="Цвет текста" style="flex:1"><x-icon name="color"></x-icon><x-icon name="down" style="margin-left:5px"></x-icon></tool-button></tool-strip>
    </div>
  </div>
</ribbon-group>
<ribbon-group label="Выравнивание" launcher>
  <div class="rows" style="flex:none">
    <div class="row"><tool-strip style="width:137px"><tool-button title="По верхнему краю" style="flex:1"><x-icon name="top"></x-icon></tool-button><tool-button title="Посередине" style="flex:1"><x-icon name="mid"></x-icon></tool-button><tool-button on title="По нижнему краю" style="flex:1"><x-icon name="bot"></x-icon></tool-button></tool-strip>
      <tool-strip style="width:64px"><tool-button title="Ориентация" style="flex:1"><x-icon name="orient"></x-icon><x-icon name="down"></x-icon></tool-button></tool-strip></div>
    <div class="row"><tool-strip style="width:137px"><tool-button title="По левому краю" style="flex:1"><x-icon name="left"></x-icon></tool-button><tool-button title="По центру" style="flex:1"><x-icon name="center"></x-icon></tool-button><tool-button title="По правому краю" style="flex:1"><x-icon name="right"></x-icon></tool-button></tool-strip>
      <tool-strip style="width:90px"><tool-button title="Уменьшить отступ" style="flex:1"><x-icon name="outdent"></x-icon></tool-button><tool-button title="Увеличить отступ" style="flex:1"><x-icon name="indent"></x-icon></tool-button></tool-strip></div>
  </div>
  <div class="vsep"></div>
  <div class="rows" style="padding-left:0">
    <tool-button start style="height:43px"><x-icon name="wrap"></x-icon>Перенос текста</tool-button>
    <tool-button start style="height:43px"><x-icon name="merge"></x-icon>Объединить и поместить в центре<x-icon name="down" style="margin-left:10px"></x-icon></tool-button>
  </div>
</ribbon-group>
<ribbon-group label="Число" launcher>
  <div class="rows">
    <combo-box label="Числовой формат" value="Общий"></combo-box>
    <div class="row"><tool-strip style="flex:158"><tool-button title="Денежный" style="flex:67"><x-icon name="money"></x-icon><x-icon name="down" style="margin-left:5px"></x-icon></tool-button><tool-button style="flex:47"><span class="num">%</span></tool-button><tool-button style="flex:44"><span class="num">000</span></tool-button></tool-strip>
    <tool-strip style="flex:90"><tool-button title="Увеличить разрядность" style="flex:1"><x-icon name="dec1"></x-icon></tool-button><tool-button title="Уменьшить разрядность" style="flex:1"><x-icon name="dec2"></x-icon></tool-button></tool-strip></div>
  </div>
</ribbon-group>
<ribbon-group label="Стили">
  <div class="bigs">
    <tool-button stack><span class="tall"><x-icon name="cond"></x-icon></span><span style="padding-top:6px">Условное</span><span class="lines">форматирование<x-icon name="down"></x-icon></span></tool-button>
    <tool-button stack><span class="tall"><x-icon name="fmtTable"></x-icon></span><span style="padding-top:6px">Форматировать</span><span class="lines">как таблицу<x-icon name="down"></x-icon></span></tool-button>
    <tool-button stack><span class="tall"><x-icon name="styles"></x-icon></span><span style="padding-top:6px">Стили</span><span class="lines">ячеек<x-icon name="down"></x-icon></span></tool-button>
  </div>
</ribbon-group>
<ribbon-group label="Ячейки">
  <div class="side">
    <tool-button start><x-icon name="insCells"></x-icon>Вставить<x-icon name="down" style="margin-left:8px"></x-icon></tool-button>
    <tool-button start><x-icon name="delCells"></x-icon>Удалить<x-icon name="down" style="margin-left:8px"></x-icon></tool-button>
    <tool-button start><x-icon name="fmtCells"></x-icon>Формат<x-icon name="down" style="margin-left:8px"></x-icon></tool-button>
  </div>
</ribbon-group>
<ribbon-group label="Редактирование">
  <div class="side" style="padding-right:0;padding-left:16px">
    <tool-button start title="Сумма"><x-icon name="sigma"></x-icon><x-icon name="down" style="margin-left:10px"></x-icon></tool-button>
    <tool-button start title="Заполнить"><x-icon name="filldown"></x-icon><x-icon name="down"></x-icon></tool-button>
    <tool-button start title="Очистить"><x-icon name="eraser"></x-icon><x-icon name="down"></x-icon></tool-button>
  </div>
  <div class="bigs">
    <tool-button stack><span class="tall"><x-icon name="sort"></x-icon></span><span style="padding-top:6px">Сортировка</span><span class="lines">и фильтр<x-icon name="down"></x-icon></span></tool-button>
    <tool-button stack><span class="tall"><x-icon name="find"></x-icon></span><span style="padding-top:6px">Найти и</span><span class="lines">выделить<x-icon name="down"></x-icon></span></tool-button>
  </div>
</ribbon-group>`);

/* ---------- formula bar ---------- */
define('xl-formula-bar', `<style>
:host{display:flex;height:53px;padding:3px 3px 0 2px;background:linear-gradient(#b7cdea 2px,#5f82b0 2px 4px,#fff 4px 43px,#5f82b0 43px 45px,#dbe8f8 45px 51px,#5f82b0 51px);color:#000}
input{height:42px;min-width:0}
.name{width:274px;text-align:center}
.drop{width:40px;height:42px}
.fx{display:flex;align-items:center;justify-content:space-between;width:168px;height:41px;margin-left:2px;padding:0 14px 0 8px;border:2px solid #6b8fc0;border-radius:22px 0 0 22px;background:linear-gradient(#f2f6fd,#cfdff4 50%,#a5bfe6)}
.dot{width:16px;height:16px;border-radius:8px;background:#d8d8de;border:2px solid #a5b4cc}
.fx i{font:italic 700 24px/30px "Liberation Serif",serif;color:#444}
.text{flex:1;padding-left:6px}
.more{width:28px;height:40px;border:2px solid #6b8fc0;background:linear-gradient(#eef4fc,#b4cbec)}
</style>
<input class="name" aria-label="Имя" value="E2"><button class="drop" aria-label="Список имён"><x-icon name="downBlack"></x-icon></button>
<div class="fx"><span class="dot"></span><i>fx</i></div>
<input class="text" aria-label="Строка формул"><button class="more" aria-label="Развернуть строку формул"><x-icon name="chevrons"></x-icon></button>`);

/* ---------- sheet ---------- */
const DEP = '%D0%92%D0%BE%D1%81%D0%BA%D0%BE%D0%B2%D0%B0%D1%8F-%D0%B4%D0%B5%D0%BF%D0%B8%D0%BB%D1%8F%D1%86%D0%B8%D1%8F-%D1%81%D0%B5%D0';
const LINKS = [
'http://kloomba.com/o/voskovaya-depilyaciya-segodnya-kiev-troeschina-27469275/',
'http://teremok.org.ua/messages/115993-Voskovaya-depilyaciya-segodnya.-Kiev.-Troeshina.html',
'https://kidsmark.net/board/product-details/uslugi/usl-krasota-i-zdorovie/usl-epiliatsiya/voskovaya-depilyatsiya-segodnya-kiev-troeshchina-197718/',
'http://kiev.ukrgo.com/post_8746476_voskovaja_depiljacija_segodnja.kiev.troeschina..html',
'http://doskaukr.com.ua/uslugi/prochie-uslugi/post?id=340971',
'http://www.uainfo.com/kabinet/?adsList=true',
'http://lavka.pp.ua/c191-22849.html',
'http://uatorg.biz/?o=view&id=1474980066#label',
'http://дошка.com.ua/cpanel.html',
'http://lboard.net/messages/4406-Voskovaya-depilyaciya-segodnya.-Kiev.-Troeshina.html',
'http://onboard.net.ua/board/?qact=view_adv&id=79145',
'http://kiev.place.ua/uk/uslugi/krasota-zdorove/procheje-krasota-zdorovje/voskovaja-depilacija-segodna-kijev-trojeshhina-172115.html?from=edit',
'http://www.doskanet.net/ukr/krasota/drugoe/post?id=255318',
'http://prodaza.com.ua/ru-kiev/uslugi/krasota-zdorove/voskovaya-depilyaciya-segodnya.-kiev.-troeschina,113145.html',
'http://kyiv.ukrboard.com.ua/ru/board/m-2048333/voskovaya-depilyatsiya-segodnya-kiev-troeshhina/',
'http://www.doski.ua/index.php',
'http://bonline.com.ua/index.php?pid=11&cat_id=908&ad_id=294776',
'http://jarmarok.com.ua/ru/00091-Красота-Здоровье.html',
'http://shook.ua/cpanel.html',
'http://jarmarok.com.ua/ru/n1543666-' + DEP,
'http://donga.dp.ua/?Advert=223476',
'http://board.salle.com.ua/detail.php?id=737868',
'http://profile.all.biz/board',
'https://sowa.ua/ad/krasota_zdorove/voskovaya-depilyatsiya-segodnya-kiev-troeschina-bAyBfoMIjB/',
'http://kiev.kv.besplatka.ua/obyavlenie/voskovaya-depilyaciya-segodnya_-kiev_-troeshchina_-c89ea1',
'https://ukrmarket.net/obyavlenie-voskovaja-depilacija-segodna-kijev-trojeshhina-70738?from=my',
'http://buysell.com.ua/obyavlenie/voskovaya_depilyaciya_segodnya__kiev__troeschina_-c523-1483314.html',
'http://doskaob.com.ua/obyavlenie/voskovaya-depilyaciya-segodnya-kiev-troeshtina_150298.html',
'http://www.freeboard.com.ua/' + DEP,
'http://stoimost.com.ua/board/kievskaja_oblast/kiev/voskovaja_depiljacija_segodnja_kiev_troeshhina/27-1-0-125838',
'http://kiev.promoz.com.ua/uslugi/krasota/prochee/250558-voskovaja-depiljatsija-segodnja-kiev-troeshina.html',
'http://cenoteca.com.ua/freeadv/m-73354/voskovaja-depiljatsija-segodnja-kiev-troeschina/',
'http://sbitok.com.ua/board/voskovaya-depilyaciya-segodnya-kiev-troeschina-P-254206-1061.html',
'http://www.ss.ua/msg/uk/work/other/VnsOG0BmSA==.html',
'http://www.avizo.com.ua/index.php?name=Rubricator&op=item&id=174243',
'http://doskaua.net/oc-panel/myads'];
define('xl-sheet', `<style>
:host{display:flex;flex:1;min-height:0;background:#fff}
.view{flex:1;min-width:0;overflow:hidden;border-right:1px solid #a9c4ea}
table{table-layout:fixed;width:2620px;border-collapse:separate;border-spacing:0;font-family:"Open Sans","Noto Sans",sans-serif;font-size:27px;line-height:28px}
th,td{padding:4px 0 0;height:40px;white-space:nowrap;font-weight:400;border-right:2px solid #d0d7e5;border-bottom:2px solid #d0d7e5}
thead th{font-size:24px;color:#27413e;background:linear-gradient(#f8fbfd,#d5dce9);border-color:#9eb6ce}
thead th.sel{background:linear-gradient(#f9d99f,#f1c15f);border-color:#f29536;box-shadow:-2px 0 0 #f29536}
thead th.all{background:#a9c4e9}
.all x-icon{display:flex;justify-content:flex-end;margin-right:7px}
tbody th{font-size:24px;color:#27413e;background:#e4ecf7;border-color:#9eb6ce}
tbody th.sel{background:#ffd58d;border-color:#f29536}
tr.hd td,tr.hd th{height:42px}
tr.hd td{padding-top:2px;text-align:center;font:700 32px/38px "Liberation Sans",sans-serif;color:#000}
td{padding-left:4px}
td.spill{border-right-color:transparent}
td.cur{outline:6px solid #000;outline-offset:-2px}
a{color:#0c0cd8;text-decoration:underline 2px;text-underline-offset:4px;text-decoration-skip-ink:none}
.bar{display:flex;flex-direction:column;align-items:center;width:37px;padding-right:8px;background:linear-gradient(90deg,#6f93c4,#7f9fcb 29px,#bcd5f7 29px)}
.split{width:26px;height:12px;margin-bottom:10px;background:#fff;border:2px solid #5f82b0}
.thumb{display:flex;align-items:center;justify-content:center;width:26px;height:53px;margin:13px 0 auto;border:2px solid #56658c;border-radius:3px;background:linear-gradient(90deg,#f4f6fa,#c9d3e3)}
.bar button:last-child{margin-bottom:10px}
</style>
<div class="view"><table><colgroup><col style="width:51px"><col style="width:1628px"><col></colgroup>
<thead><tr><th class="all"><x-icon name="corner"></x-icon></th><th>D</th><th class="sel">E</th></tr></thead><tbody></tbody></table></div>
<div class="bar"><div class="split"></div><button aria-label="Вверх"><x-icon name="up"></x-icon></button><div class="thumb"><x-icon name="gripV"></x-icon></div><button aria-label="Вниз"><x-icon name="dn"></x-icon></button></div>`, (el, root) => {
  const body = root.querySelector('tbody');
  body.innerHTML = '<tr class="hd"><th>1</th><td>Ссылка на объявление</td><td>Примечание</td></tr><tr class="hd"><th class="sel">2</th><td></td><td class="cur"></td></tr>';
  LINKS.forEach((url, i) => {
    const tr = body.insertRow(), th = document.createElement('th'), td = document.createElement('td'), a = document.createElement('a');
    th.textContent = i + 3;
    a.href = url;
    a.textContent = url;
    td.append(a);
    if ([5, 14, 22, 31].includes(i + 3)) td.className = 'spill';
    tr.append(th, td, document.createElement('td'));
  });
});

/* ---------- sheet tabs, status bar ---------- */
define('xl-sheetbar', `<style>
:host{display:flex;height:32px;background:linear-gradient(#7f9fcf,#a3bcdf 30%,#98b4dd);border-bottom:3px solid #5a7fb5}
.nav{display:flex;align-items:center;justify-content:space-between;width:117px;padding:0 13px 0 9px;background:linear-gradient(#e1edfb,#b7d1f3);border-top:1px solid #7f9fcf}
.tab{display:grid;align-items:start;justify-content:start;justify-items:start;margin-right:-22px}
.tab>*{grid-area:1/1}
.tab span{position:relative;margin-left:20px;line-height:28px;color:#15428b}
.tab.on span{font-weight:700;margin-left:19px}
.tab.on{z-index:1}
.gap{flex:1}
.h{flex:none;width:41%;display:flex;align-items:center;gap:12px;padding:0 2px 0 3px;background:linear-gradient(#6f93c2,#7b9bcb)}
.split{width:10px;height:27px;background:#fff;border:2px solid #5f82b0}
.thumb{display:flex;align-items:center;justify-content:center;flex:458;height:27px;border:2px solid #56658c;border-radius:3px;background:linear-gradient(#f1f4f8,#d5dce6 45%,#b5c1d3 50%,#dde4f0)}
.sp1{flex:336}.sp2{flex:104}
</style>
<div class="nav"><button aria-label="Первый"><x-icon name="first"></x-icon></button><button aria-label="Предыдущий"><x-icon name="prev"></x-icon></button><button aria-label="Следующий"><x-icon name="next"></x-icon></button><button aria-label="Последний"><x-icon name="last"></x-icon></button></div>
<button class="tab on"><x-icon name="tabOn"></x-icon><span>Лист1</span></button><button class="tab"><x-icon name="tab"></x-icon><span>Лист2</span></button><button class="tab"><x-icon name="tab"></x-icon><span>Лист3</span></button><button class="tab" aria-label="Вставить лист"><x-icon name="newTab"></x-icon></button>
<div class="gap"></div>
<div class="h"><div class="split"></div><button aria-label="Влево"><x-icon name="lt"></x-icon></button><div class="sp1"></div><div class="thumb"><x-icon name="gripH"></x-icon></div><div class="sp2"></div><button aria-label="Вправо"><x-icon name="rt"></x-icon></button><div class="split"></div><div style="width:24px"></div></div>`);
define('xl-status', `<style>
:host{display:flex;height:44px;background:linear-gradient(#fff 2px,#cfe2fb 3px,#c6dcf8 30%,#b1cef3 34%,#dae9fc 92%,#b3c6de);color:#15306e}
.state{width:104px;padding:7px 0 0 12px;border-right:2px solid #9dbae3}
.gap{flex:1}
.right{display:flex;align-items:center;width:496px;padding:0 10px 2px 9px;border-left:3px solid #7ba0d2;background:linear-gradient(#a9cbf8,#8fb6ea 35%,#7aa3de 40%,#87abdf)}
.views{display:flex;height:37px;border:2px solid #5f86c0;border-radius:4px;background:#c3dafa}
.views button{width:36px}
.views button.on{background:linear-gradient(#fbd29a,#f9b94f 50%,#fee08c)}
output{margin:0 17px 0 18px;font-size:22px;line-height:30px}
input{appearance:none;flex:1;min-width:0;height:30px;background:linear-gradient(transparent 13px,#4f76b2 13px 15px,#cfe0f7 15px 17px,transparent 17px)}
input::-webkit-slider-thumb{appearance:none;width:18px;height:27px;background:linear-gradient(90deg,#e6effa 7px,#6f8bb8 7px 10px,#e6effa 10px);border:2px solid #5b7db0;clip-path:polygon(0 0,100% 0,100% 65%,50% 100%,0 65%)}
</style>
<div class="state">Готово</div><div class="gap"></div>
<div class="right"><div class="views"><button class="on" aria-label="Обычный"><x-icon name="vNormal"></x-icon></button><button aria-label="Разметка"><x-icon name="vLayout"></x-icon></button><button aria-label="Страничный"><x-icon name="vBreak"></x-icon></button></div><output>100%</output><button aria-label="Уменьшить"><x-icon name="minus"></x-icon></button><input type="range" min="0" max="200" value="100" aria-label="Масштаб"><button aria-label="Увеличить"><x-icon name="plus"></x-icon></button></div>`);

/* ---------- taskbar ---------- */
define('task-button', `<style>
:host{display:flex;width:97px}
button{flex:1;background:#d4d0c8;border:solid;border-width:3px 4px 4px 3px;border-color:#fff #404040 #404040 #fff}
:host([pressed]) button{background:#fff;border-color:#404040 #e9e6df #e9e6df #404040}
:host([multi]) button{box-shadow:inset -4px 0 #d4d0c8,inset -7px 0 #404040,inset -10px 0 #fff,inset -13px 0 #404040;padding-right:12px}
</style><button type="button"><slot></slot></button>`, (el, root) => root.querySelector('button').setAttribute('aria-label', el.title));
define('win-taskbar', `<style>
:host{display:flex;height:86px;padding:5px 3px 5px;background:#d4d0c8;border-top:2px solid #fff;color:#000}
.start{width:102px;border:solid;border-width:3px 4px 4px 3px;border-color:#fff #404040 #404040 #fff;justify-content:flex-start;padding-left:2px}
.start b{display:grid;place-items:center;height:66px;width:59px;border:2px dotted #000;font-size:20px}
.sep{width:6px;margin:4px 0;border:solid;border-width:2px 3px 2px 2px;border-color:#fff #808080 #808080 #fff}
.media{width:116px;padding-left:24px}
.apps{display:flex;gap:3px;flex:1}
.tray{display:flex;align-items:center;gap:15px;border:2px solid;border-color:#808080 #fff #fff #808080;padding:0 5px 0 13px}
.clock{text-align:center;font-size:22px;line-height:32px;margin:0 0 0 11px}
.lang{margin:0 10px 0 17px}
</style>
<button class="start"><x-icon name="win"></x-icon><b>Пуск</b></button>
<div class="sep" style="margin-left:14px"></div>
<button class="media" aria-label="Проигрыватель"><x-icon name="media"></x-icon></button>
<div class="apps"><task-button title="Internet Explorer"><x-icon name="ie"></x-icon></task-button><task-button title="Opera"><x-icon name="opera"></x-icon></task-button><task-button title="Firefox"><x-icon name="firefox"></x-icon></task-button><task-button multi title="Проводник"><x-icon name="explorer"></x-icon></task-button><task-button title="FineReader"><x-icon name="finereader"></x-icon></task-button><task-button title="FoxPro"><x-icon name="fox"></x-icon></task-button><task-button title="Word"><x-icon name="word"></x-icon></task-button><task-button pressed title="Excel"><x-icon name="excel"></x-icon></task-button></div>
<div class="sep"></div><button class="lang">EN</button><div class="sep" style="margin:13px 5px 15px 0;width:4px;border-width:0 2px 0 2px;border-color:#808080 #fff"></div>
<div class="tray"><x-icon name="adobe"></x-icon><x-icon name="globe"></x-icon><x-icon name="flag"></x-icon><x-icon name="cam"></x-icon><x-icon name="note"></x-icon><x-icon name="net"></x-icon><x-icon name="sound"></x-icon><div class="clock">15:06<br>06.10.2016</div><x-icon name="desk"></x-icon></div>`);

define('xl-app', `<style>
:host{display:flex;flex-direction:column;height:100vh;position:relative}
.office{position:absolute;left:5px;top:7px}
</style>
<xl-titlebar></xl-titlebar><xl-tabs></xl-tabs><xl-ribbon></xl-ribbon><xl-formula-bar></xl-formula-bar><xl-sheet></xl-sheet><xl-sheetbar></xl-sheetbar><xl-status></xl-status><win-taskbar></win-taskbar>
<button class="office" aria-label="Кнопка Office"><x-icon name="office"></x-icon></button>`);
</script>
</body>
</html>
